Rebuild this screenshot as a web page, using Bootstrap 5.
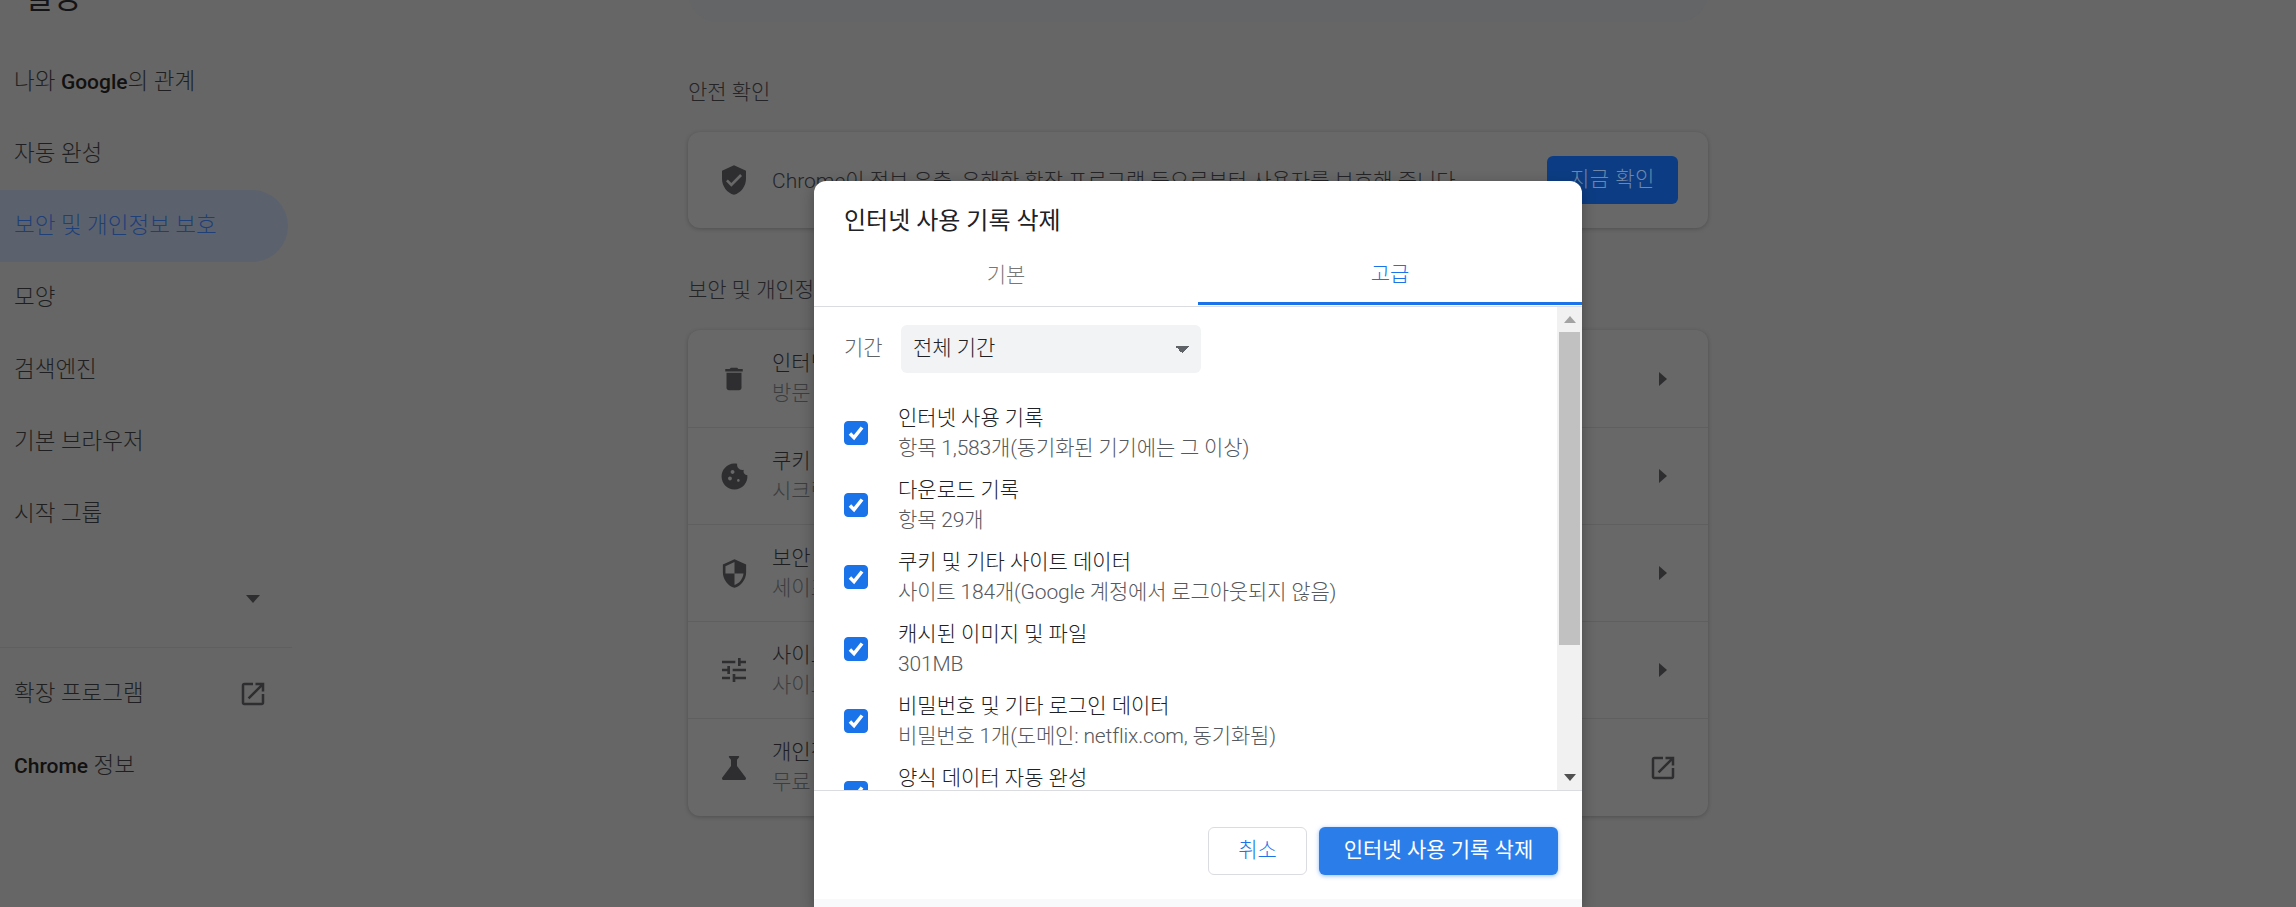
<!doctype html>
<html lang="ko">
<head>
<meta charset="utf-8">
<title>설정</title>
<link href="https://cdn.jsdelivr.net/npm/bootstrap@5.3.0/dist/css/bootstrap.min.css" rel="stylesheet">
<style>
html,body{height:907px;overflow:hidden}
body{background:#666;font-family:Roboto,"Noto Sans CJK KR",sans-serif;font-size:21px;color:#1a1a1c;font-weight:300;line-height:1.4}
.stage{position:relative;width:2296px;height:907px;overflow:hidden}
.side{width:292px;flex:none;font-size:22.5px}
.side-title{margin-top:-17px;padding-left:24px;font-size:31px;line-height:30px;font-weight:400;color:#141416}
.side-title-wrap{height:63px}
.side-row{height:72px;padding-left:14px;color:#1f1f21}
.side-row.on{width:288px;background:#5c626d;color:#1f3f78;border-radius:0 36px 36px 0}
.side-more{height:98px;padding-right:32px;border-bottom:1.5px solid #5f5f5f}
.side-rows-b{padding-top:10px}
.lat{font-weight:500;color:#111;font-size:21px}
.tri-d{width:0;height:0;border-left:7px solid transparent;border-right:7px solid transparent;border-top:8px solid #2e2e30}
.tri-r{width:0;height:0;border-top:7px solid transparent;border-bottom:7px solid transparent;border-left:8px solid #2e2e30}
.ico{fill:#2e2e30;flex:none}
.ext{padding-right:24px}
.main-col{width:1020px;margin-left:396px}
.searchbox{height:60px;margin-top:-38px;background:#636567;border-radius:0 0 30px 30px}
.sec{line-height:28px;color:#242426;font-size:21px}
.sec-a{height:70px;padding-top:56px}
.sec2{height:102px;padding-top:48px}
.pane{background:#686868;border-radius:12px;box-shadow:0 1px 4px rgba(0,0,0,.22)}
.safety{height:96px;margin-top:40px;padding:0 30px 0 30px}
.safety-text{margin-left:22px;padding-top:4px;color:#242426;white-space:nowrap}
.btn-now{width:131px;height:48px;background:#0c3d84;border:0;border-radius:6px;color:#6f86a8;font-size:21px;font-weight:300;padding:0;letter-spacing:.5px}
.btn-now:hover{background:#0c3d84;color:#6f86a8}
.set-row{height:97px;padding:0 30px 0 28px;border-top:1.5px solid #5f5f5f;white-space:nowrap}
.set-row:first-child{border-top:0}
.set-row:last-child{height:98px}
.set-title{color:#1d1d1f;line-height:29px}
.set-sub{color:#3c3d3f;line-height:30px}
.set-text{margin-left:20px}
.ico-box{width:36px;height:36px;flex:none}
.end-box{width:30px;flex:none}
.dlg{position:absolute;left:814px;top:181px;width:768px;height:726px;background:#fff;border-radius:12px 12px 0 0;overflow:hidden;box-shadow:0 4px 14px rgba(0,0,0,.3)}
.dlg-head{height:70px;padding:23px 30px 0;font-size:24px;line-height:34px;font-weight:400;color:#202124}
.dlg-tabs{height:56px;border-bottom:1.5px solid #dadce0;flex-wrap:nowrap}
.dlg-tab{flex:1 1 50%;display:flex;align-items:center;justify-content:center;color:#777;height:54.5px;padding-bottom:6px}
.dlg-tab.on{color:#1a73e8;border-bottom:3px solid #1a73e8;height:54px;padding-bottom:3px}
.dlg-body{height:484px;border-bottom:1.5px solid #dadce0;overflow:hidden}
.dlg-scroll{padding:18px 0 0 30px;flex:1 1 auto;overflow:hidden}
.range{margin-bottom:24px}
.range-lb{color:#5f6368;width:57px}
.range-sel.form-select{width:300px;height:48px;background-color:#f1f3f4;border:0;border-radius:6px;font-size:21px;font-weight:300;color:#202124;padding:0 12px;background-image:linear-gradient(45deg,transparent 50%,#5f6368 50%),linear-gradient(-45deg,transparent 50%,#5f6368 50%);background-position:calc(100% - 19px) 21px,calc(100% - 12px) 21px;background-size:7px 7px;background-repeat:no-repeat}
.clr{height:72px;white-space:nowrap}
.clr .form-check-input{width:24px;height:24px;margin:0 30px 0 0;background-color:#1a73e8;border-color:#1a73e8;border-radius:4px;flex:none}
.clr .form-check-input:checked[type=checkbox]{--bs-form-check-bg-image:url("data:image/svg+xml,%3csvg xmlns='http://www.w3.org/2000/svg' viewBox='0 0 20 20'%3e%3cpath fill='none' stroke='%23fff' stroke-width='3.2' d='M4.5 10.5l3.7 3.7L15.5 5'/%3e%3c/svg%3e")}
.clr-t{color:#202124;line-height:30px}
.clr-s{color:#55585c;line-height:30px;letter-spacing:-.16px}
.sbar{width:25px;flex:none;background:#f1f1f1}
.sbar-btn{height:25px}
.tri-u{width:0;height:0;border-left:6px solid transparent;border-right:6px solid transparent;border-bottom:7px solid #a3a3a3}
.tri-n{width:0;height:0;border-left:6px solid transparent;border-right:6px solid transparent;border-top:7px solid #505050}
.sthumb{height:313px;margin:0 2px;background:#c1c1c1}
.dlg-foot{height:108px;padding:36px 24px 0 0;background:#fff}
.btn-cancel{width:99px;height:48px;padding:0;background:#fff;border:1.5px solid #dadce0;border-radius:6px;color:#1a73e8;font-size:21px;font-weight:300}
.btn-del{width:239px;height:48px;padding:0;background:#2b7de9;border:0;border-radius:6px;color:#fff;font-size:21px;font-weight:400;box-shadow:0 1px 4px rgba(43,125,233,.5)}
.btn-del:hover{background:#2b7de9;color:#fff}
.dlg-tail{flex:1 1 auto;background:#f8f9fa}
</style>
</head>
<body>
<div class="stage">
  <div class="d-flex">
    <nav class="side">
      <div class="side-title-wrap"><div class="side-title">설정</div></div>
      <div class="side-row d-flex align-items-center"><span>나와 <span class="lat">Google</span>의 관계</span></div>
      <div class="side-row d-flex align-items-center">자동 완성</div>
      <div class="side-row on d-flex align-items-center">보안 및 개인정보 보호</div>
      <div class="side-row d-flex align-items-center">모양</div>
      <div class="side-row d-flex align-items-center">검색엔진</div>
      <div class="side-row d-flex align-items-center">기본 브라우저</div>
      <div class="side-row d-flex align-items-center">시작 그룹</div>
      <div class="side-more d-flex align-items-center justify-content-end"><span class="tri-d"></span></div>
      <div class="side-rows-b">
        <div class="side-row ext d-flex align-items-center justify-content-between">확장 프로그램
          <svg class="ico" width="30" height="30" viewBox="0 0 24 24"><path d="M19 19H5V5h7V3H5c-1.11 0-2 .9-2 2v14c0 1.1.89 2 2 2h14c1.1 0 2-.9 2-2v-7h-2v7zM14 3v2h3.59l-9.83 9.83 1.41 1.41L19 6.41V10h2V3h-7z"/></svg>
        </div>
        <div class="side-row d-flex align-items-center"><span><span class="lat">Chrome</span> 정보</span></div>
      </div>
    </nav>
    <main class="main-col">
      <div class="searchbox"></div>
      <div class="sec sec-a">안전 확인</div>
      <div class="pane safety d-flex align-items-center justify-content-between">
        <div class="d-flex align-items-center">
          <svg class="ico" width="32" height="32" viewBox="0 0 24 24"><path d="M12 1L3 5v6c0 5.55 3.84 10.74 9 12 5.16-1.26 9-6.45 9-12V5l-9-4zm-2 16l-4-4 1.41-1.41L10 14.17l6.59-6.59L18 9l-8 8z"/></svg>
          <span class="safety-text">Chrome이 정보 유출, 유해한 확장 프로그램 등으로부터 사용자를 보호해 줍니다.</span>
        </div>
        <button class="btn btn-now" type="button">지금 확인</button>
      </div>
      <div class="sec sec2">보안 및 개인정보 보호</div>
      <div class="pane">
        <div class="set-row d-flex align-items-center">
          <span class="ico-box d-flex align-items-center justify-content-center"><svg class="ico" width="30" height="30" viewBox="0 0 24 24"><path d="M6 19c0 1.1.9 2 2 2h8c1.1 0 2-.9 2-2V7H6v12zM19 4h-3.5l-1-1h-5l-1 1H5v2h14V4z"/></svg></span>
          <div class="set-text flex-grow-1"><div class="set-title">인터넷 사용 기록 삭제</div><div class="set-sub">방문 기록, 쿠키, 캐시 등을 삭제합니다.</div></div>
          <span class="end-box d-flex justify-content-center"><span class="tri-r"></span></span>
        </div>
        <div class="set-row d-flex align-items-center">
          <span class="ico-box d-flex align-items-center justify-content-center"><svg class="ico" width="31" height="31" viewBox="0 0 24 24"><path d="M21.95 10.99c-1.79-.03-3.7-1.95-2.68-4.22-2.98 1-5.77-1.59-5.19-4.56C6.95.71 2 6.58 2 12c0 5.52 4.48 10 10 10 5.89 0 10.54-5.08 9.95-11.01zM8.5 15c-.83 0-1.5-.67-1.5-1.5S7.67 12 8.5 12s1.5.67 1.5 1.5S9.33 15 8.5 15zm2-5C9.67 10 9 9.33 9 8.5S9.67 7 10.5 7s1.5.67 1.5 1.5-.67 1.5-1.5 1.5zm4.5 6c-.55 0-1-.45-1-1s.45-1 1-1 1 .45 1 1-.45 1-1 1z"/></svg></span>
          <div class="set-text flex-grow-1"><div class="set-title">쿠키 및 기타 사이트 데이터</div><div class="set-sub">시크릿 모드에서 서드 파티 쿠키가 차단됩니다.</div></div>
          <span class="end-box d-flex justify-content-center"><span class="tri-r"></span></span>
        </div>
        <div class="set-row d-flex align-items-center">
          <span class="ico-box d-flex align-items-center justify-content-center"><svg class="ico" width="31" height="31" viewBox="0 0 24 24"><path d="M12 1L3 5v6c0 5.55 3.84 10.74 9 12 5.16-1.26 9-6.45 9-12V5l-9-4zm0 10.99h7c-.53 4.12-3.28 7.79-7 8.94V12H5V6.3l7-3.11v8.8z"/></svg></span>
          <div class="set-text flex-grow-1"><div class="set-title">보안</div><div class="set-sub">세이프 브라우징 및 기타 보안 설정</div></div>
          <span class="end-box d-flex justify-content-center"><span class="tri-r"></span></span>
        </div>
        <div class="set-row d-flex align-items-center">
          <span class="ico-box d-flex align-items-center justify-content-center"><svg class="ico" width="32" height="32" viewBox="0 0 24 24"><path d="M3 17v2h6v-2H3zM3 5v2h10V5H3zm10 16v-2h8v-2h-8v-2h-2v6h2zM7 9v2H3v2h4v2h2V9H7zm14 4v-2H11v2h10zm-6-4h2V7h4V5h-4V3h-2v6z"/></svg></span>
          <div class="set-text flex-grow-1"><div class="set-title">사이트 설정</div><div class="set-sub">사이트에서 사용할 수 있는 정보를 관리합니다.</div></div>
          <span class="end-box d-flex justify-content-center"><span class="tri-r"></span></span>
        </div>
        <div class="set-row d-flex align-items-center">
          <span class="ico-box d-flex align-items-center justify-content-center"><svg class="ico" width="36" height="36" viewBox="0 0 24 24"><path d="M19.8 18.4L14 10.67V6.5l1.35-1.69c.26-.33.03-.81-.39-.81H9.04c-.42 0-.65.48-.39.81L10 6.5v4.17L4.2 18.4c-.49.66-.02 1.6.8 1.6h14c.82 0 1.29-.94.8-1.6z"/></svg></span>
          <div class="set-text flex-grow-1"><div class="set-title">개인정보 보호 샌드박스</div><div class="set-sub">무료 체험 기능 사용 설정됨</div></div>
          <svg class="ico" width="30" height="30" viewBox="0 0 24 24"><path d="M19 19H5V5h7V3H5c-1.11 0-2 .9-2 2v14c0 1.1.89 2 2 2h14c1.1 0 2-.9 2-2v-7h-2v7zM14 3v2h3.59l-9.83 9.83 1.41 1.41L19 6.41V10h2V3h-7z"/></svg>
        </div>
      </div>
    </main>
  </div>

  <div class="dlg d-flex flex-column" role="dialog">
    <div class="dlg-head">인터넷 사용 기록 삭제</div>
    <div class="nav dlg-tabs">
      <div class="dlg-tab">기본</div>
      <div class="dlg-tab on">고급</div>
    </div>
    <div class="dlg-body d-flex">
      <div class="dlg-scroll">
        <div class="range d-flex align-items-center">
          <span class="range-lb">기간</span>
          <select class="form-select range-sel"><option>전체 기간</option></select>
        </div>
        <div class="clr d-flex align-items-center"><input class="form-check-input" type="checkbox" checked><div><div class="clr-t">인터넷 사용 기록</div><div class="clr-s">항목 1,583개(동기화된 기기에는 그 이상)</div></div></div>
        <div class="clr d-flex align-items-center"><input class="form-check-input" type="checkbox" checked><div><div class="clr-t">다운로드 기록</div><div class="clr-s">항목 29개</div></div></div>
        <div class="clr d-flex align-items-center"><input class="form-check-input" type="checkbox" checked><div><div class="clr-t">쿠키 및 기타 사이트 데이터</div><div class="clr-s">사이트 184개(Google 계정에서 로그아웃되지 않음)</div></div></div>
        <div class="clr d-flex align-items-center"><input class="form-check-input" type="checkbox" checked><div><div class="clr-t">캐시된 이미지 및 파일</div><div class="clr-s">301MB</div></div></div>
        <div class="clr d-flex align-items-center"><input class="form-check-input" type="checkbox" checked><div><div class="clr-t">비밀번호 및 기타 로그인 데이터</div><div class="clr-s">비밀번호 1개(도메인: netflix.com, 동기화됨)</div></div></div>
        <div class="clr d-flex align-items-center"><input class="form-check-input" type="checkbox" checked><div><div class="clr-t">양식 데이터 자동 완성</div><div class="clr-s">주소 2개 외 1개</div></div></div>
      </div>
      <div class="sbar d-flex flex-column">
        <div class="sbar-btn d-flex align-items-center justify-content-center"><span class="tri-u"></span></div>
        <div class="sthumb"></div>
        <div class="flex-grow-1"></div>
        <div class="sbar-btn d-flex align-items-center justify-content-center"><span class="tri-n"></span></div>
      </div>
    </div>
    <div class="dlg-foot d-flex justify-content-end gap-2">
      <button class="btn btn-cancel" type="button">취소</button>
      <button class="btn btn-del ms-1" type="button">인터넷 사용 기록 삭제</button>
    </div>
    <div class="dlg-tail"></div>
  </div>
</div>
<script src="https://cdn.jsdelivr.net/npm/bootstrap@5.3.0/dist/js/bootstrap.bundle.min.js"></script>
</body>
</html>
